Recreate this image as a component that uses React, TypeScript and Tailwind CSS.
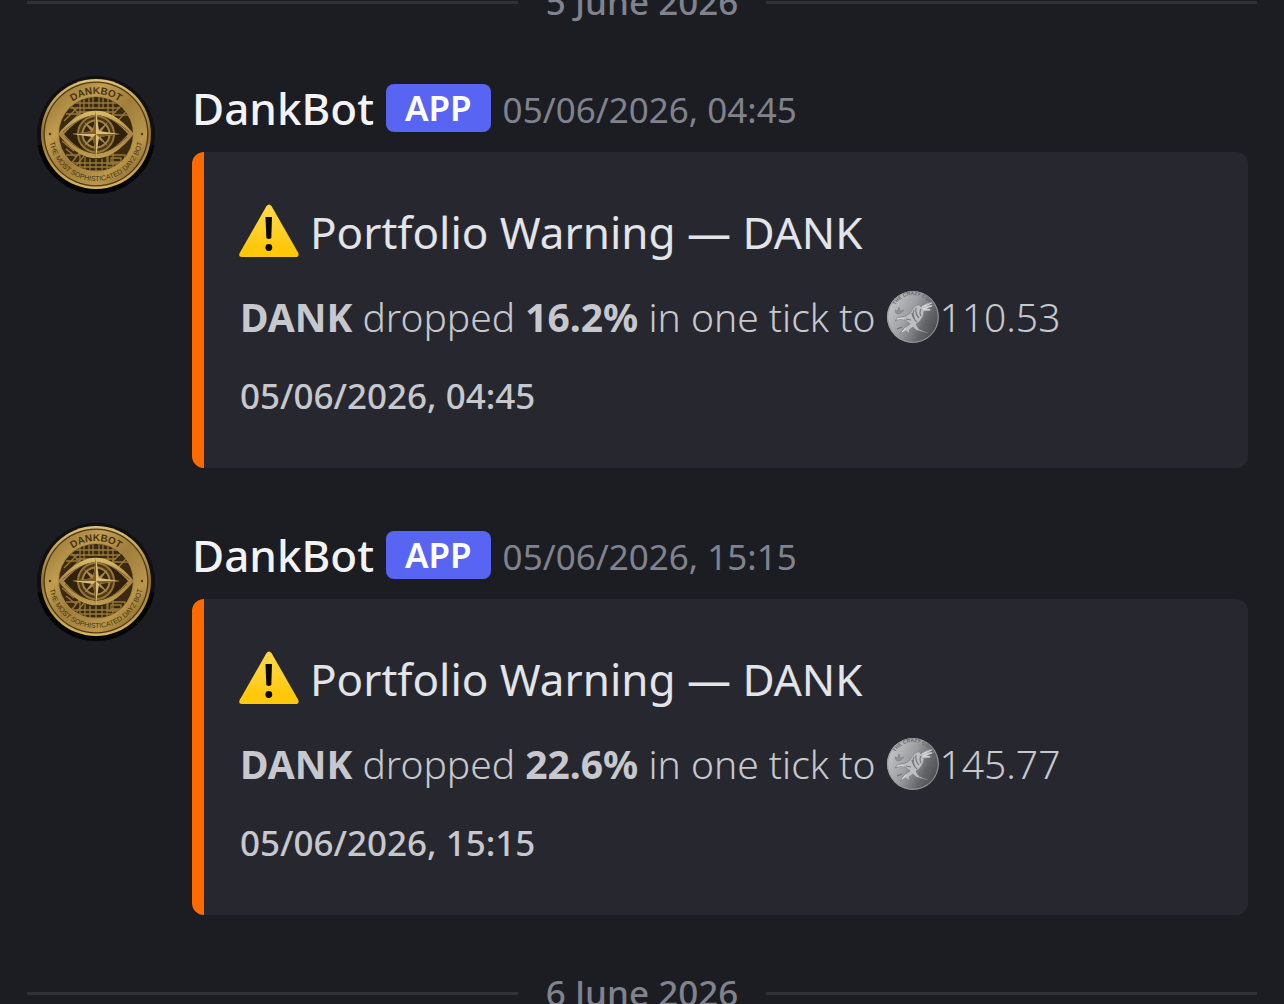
type Alert = {
  id: string;
  time: string;
  drop: string;
  price: string;
};

const alerts: Alert[] = [
  { id: "a", time: "05/06/2026, 04:45", drop: "16.2%", price: "110.53" },
  { id: "b", time: "05/06/2026, 15:15", drop: "22.6%", price: "145.77" },
];

function BotCoin({ id }: { id: string }) {
  const gold = `gold-${id}`;
  const ring = `ring-${id}`;
  const eye = `eye-${id}`;
  const top = `top-${id}`;
  const bottom = `bottom-${id}`;
  const disc = `disc-${id}`;
  return (
    <svg viewBox="0 0 120 120" className="size-[120px] shrink-0" role="img" aria-label="DankBot avatar">
      <defs>
        <linearGradient id={gold} x1="0" y1="0" x2="1" y2="1">
          <stop offset="0" stopColor="#8f6d2f" />
          <stop offset="0.3" stopColor="#c09d50" />
          <stop offset="0.5" stopColor="#a07d3a" />
          <stop offset="0.75" stopColor="#ba974b" />
          <stop offset="1" stopColor="#6d4f1c" />
        </linearGradient>
        <linearGradient id={ring} x1="0" y1="0" x2="0" y2="1">
          <stop offset="0" stopColor="#dcc37a" />
          <stop offset="0.5" stopColor="#94722f" />
          <stop offset="1" stopColor="#dab762" />
        </linearGradient>
        <linearGradient id={eye} x1="0" y1="0" x2="0" y2="1">
          <stop offset="0" stopColor="#d6b869" />
          <stop offset="0.5" stopColor="#a98441" />
          <stop offset="1" stopColor="#bd9a50" />
        </linearGradient>
        <path id={top} d="M20 59A40 40 0 0 1 100 59" />
        <path id={bottom} d="M13 59A47 47 0 0 0 107 59" />
        <clipPath id={disc}>
          <circle cx="60" cy="59" r="37" />
        </clipPath>
      </defs>
      <circle cx="60" cy="60" r="59" fill="#101012" />
      <path d="M4 70A57 57 0 0 0 116 70" fill="none" stroke="#050505" strokeWidth="5" />
      <circle cx="60" cy="59" r="55" fill={`url(#${ring})`} />
      <circle cx="60" cy="59" r="52.500" fill="#4e3815" />
      <circle cx="60" cy="59" r="51.200" fill={`url(#${gold})`} />
      <circle cx="60" cy="59" r="38" fill="#a98645" />
      <circle cx="60" cy="59" r="37" fill="#3a2a10" />
      <g clipPath={`url(#${disc})`} fill="none" stroke="#98783a" strokeWidth="1.300">
        <path d="M44 22v20M48 22v16M53 20v14M57 20v14M63 20v14M67 20v14M72 22v16M77 24v16M38 28h44M34 33h50M40 37h40M30 39h14M76 40h18" />
        <path d="M28 46l14-14M32 50l14-14M80 48l14-16M76 40l12-12M25 56l12-10M92 56l-10-9M34 30l8 8" />
        <path d="M44 78v20M49 82v14M54 84v14M60 84v14M66 84v14M71 80v18M77 78v14M36 88h48M40 92h40M44 96h32M30 80h14" />
        <path d="M26 66l12 10M30 74l10 8M34 90l14-18M39 92l13-16M72 80h17v9H72zM75 83h10v4H75zM88 66l-8 10" />
      </g>
      <path d="M25 59Q43 38 60 38T95 59Q77 81 60 81T25 59Z" fill="#2f210c" stroke={`url(#${eye})`} strokeWidth="4.500" />
      <path d="M27 57Q44 41 60 41T93 57M29 62Q44 78 60 78T91 62" fill="none" stroke="#66491d" strokeWidth="0.800" />
      <circle cx="60" cy="59" r="18" fill="#4c3815" stroke="#957439" strokeWidth="2" />
      <circle cx="60" cy="59" r="13.500" fill="#33240d" stroke="#a28041" strokeWidth="2" />
      <path d="M48 47L61.500 56L72 47L63 60L72 71L60 62L48 71L57 59Z" fill="#aa8948" />
      <path d="M60 35L63 56L84 59L63 62L60 83L57 62L36 59L57 56Z" fill="#d9bd76" />
      <path d="M60 35V83L57 62L60 59H36L57 56ZM60 59H84L63 62Z" fill="#7e5e29" />
      <circle cx="14" cy="59" r="1.200" fill="#4e3815" />
      <circle cx="106" cy="59" r="1.200" fill="#4e3815" />
      <text className="font-['Liberation_Sans'] text-[10px] font-bold" fill="#493411">
        <textPath href={`#${top}`} startOffset="50%" textAnchor="middle">DANKBOT</textPath>
      </text>
      <text className="font-['Liberation_Sans'] text-[7px]" fill="#493411">
        <textPath href={`#${bottom}`} startOffset="50%" textAnchor="middle">THE MOST SOPHISTICATED DAYZ BOT</textPath>
      </text>
    </svg>
  );
}

function WarningIcon({ id }: { id: string }) {
  const fill = `warn-${id}`;
  return (
    <svg viewBox="1 1 60 54" className="h-[54px] w-[60px] shrink-0 overflow-visible" role="img" aria-label="Warning">
      <defs>
        <linearGradient id={fill} x1="0" y1="0" x2="0" y2="1">
          <stop offset="0" stopColor="#ffd84a" />
          <stop offset="0.5" stopColor="#ffd029" />
          <stop offset="0.8" stopColor="#ffc80b" />
        </linearGradient>
      </defs>
      <path d="M27.500 2Q30 -1 32.500 2L59.300 49Q60.500 53 56.500 53H3Q-1 53 0.700 49Z" fill={`url(#${fill})`} />
      <path d="M26.500 13H33L32.300 34Q29.800 36 27.300 34Z" fill="#090909" />
      <circle cx="29.800" cy="43.500" r="3.400" fill="#090909" />
    </svg>
  );
}

function SilverCoin({ id }: { id: string }) {
  const fill = `silver-${id}`;
  const arc = `arc-${id}`;
  return (
    <svg viewBox="0 0 54 54" className="size-[54px] shrink-0" role="img" aria-label="coins">
      <defs>
        <linearGradient id={fill} x1="0" y1="0.200" x2="1" y2="0.700">
          <stop offset="0" stopColor="#c9cacc" />
          <stop offset="0.450" stopColor="#9c9da0" />
          <stop offset="0.750" stopColor="#66676b" />
          <stop offset="1" stopColor="#4a4b50" />
        </linearGradient>
        <path id={arc} d="M7 21A20.500 20.500 0 0 1 47 21" />
      </defs>
      <circle cx="27" cy="27" r="26" fill={`url(#${fill})`} />
      <circle cx="27" cy="27" r="25.300" fill="none" stroke="#98999c" strokeWidth="1" />
      <text className="font-['Liberation_Sans'] text-[5px] font-bold" fill="#66676b">
        <textPath href={`#${arc}`} startOffset="50%" textAnchor="middle">THE CRAZY COIN</textPath>
      </text>
      <path d="M9 31Q10 27 15 27Q20 27 24 23Q27 17 31 15Q34 14 35 17Q40 12 47 12L41 15L48 15L41 18L46 20L38 21Q38 27 33 32L30 34L32 38L42 43L30 40L27 37L23 40L24 44L20 41L14 44L18 38L24 34Q21 31 19 30Q13 28 9 31Z" fill="#bdbec1" stroke="#77787c" strokeWidth="0.600" />
      <path d="M30 18Q29 24 33 28M26 23Q27 29 31 32M35 19Q33 23 35 26M20 29L25 30M28 20Q26 25 29 30" fill="none" stroke="#77787c" strokeWidth="1.200" />
      <path d="M36 17L46 13M37 19L46 16M38 20L44 20M11 29Q14 28 18 29M16 42L20 38" fill="none" stroke="#e2e3e5" strokeWidth="0.900" />
      <path d="M9 20L12 21L13 17L14 21L18 20L15 23L12 24L10 23Z" fill="#909195" stroke="#808185" strokeWidth="0.700" />
      <path d="M39 31H48M39 34H47M11 39L16 37M33 39L42 42" stroke="#595a5f" strokeWidth="0.800" />
    </svg>
  );
}

function DateDivider({ date }: { date: string }) {
  return (
    <div role="separator" aria-label={date} className="flex h-12 shrink-0 items-center gap-7 px-[27px]">
      <div className="h-[3px] flex-1 bg-[#303137]" />
      <span className="text-[35px] leading-[48px] font-medium whitespace-nowrap text-[#80838d]">{date}</span>
      <div className="h-[3px] flex-1 bg-[#303137]" />
    </div>
  );
}

function Message({ alert }: { alert: Alert }) {
  return (
    <article className="flex gap-9 px-9">
      <BotCoin id={alert.id} />
      <div className="min-w-0 flex-1 pt-[9px]">
        <header className="flex h-12 items-center whitespace-nowrap">
          <h2 className="text-[44px] leading-[48px] font-medium text-[#f3f3f5]">DankBot</h2>
          <span className="ml-3 flex h-12 items-center rounded-lg bg-[#5865f2] px-[19px] text-[35px] leading-[48px] font-semibold text-white">
            APP
          </span>
          <time className="ml-3 pt-1 text-[35px] leading-[48px] text-[#80838d]">{alert.time}</time>
        </header>
        <section className="mt-5 rounded-xl border-l-12 border-[#ff6a00] bg-[#27282f] px-9 py-12">
          <h3 className="flex h-16 items-center gap-2.5 text-[44px] leading-[64px] whitespace-nowrap text-[#e3e4e8]">
            <WarningIcon id={alert.id} />
            <span>Portfolio Warning — DANK</span>
          </h3>
          <p className="mt-5 flex h-[66px] items-center text-[39px] leading-[66px] font-light whitespace-pre text-[#c7c8ce]">
            <span>
              <strong className="font-bold">DANK</strong> dropped <strong className="font-bold">{alert.drop}</strong> in one tick to{" "}
            </span>
            <SilverCoin id={alert.id} />
            <span>{alert.price}</span>
          </p>
          <p className="mt-[22px] text-[35px] leading-[48px] font-medium text-[#c7c8ce]">{alert.time}</p>
        </section>
      </div>
    </article>
  );
}

export default function App() {
  return (
    <main className="h-screen overflow-hidden bg-[#1c1d22] font-['Noto_Sans',sans-serif]">
      <div className="-mt-[22px] flex flex-col">
        <DateDivider date="5 June 2026" />
        <div className="mt-[49px] mb-[54px] flex flex-col gap-[54px]">
          {alerts.map((alert) => (
            <Message key={alert.id} alert={alert} />
          ))}
        </div>
        <DateDivider date="6 June 2026" />
      </div>
    </main>
  );
}
